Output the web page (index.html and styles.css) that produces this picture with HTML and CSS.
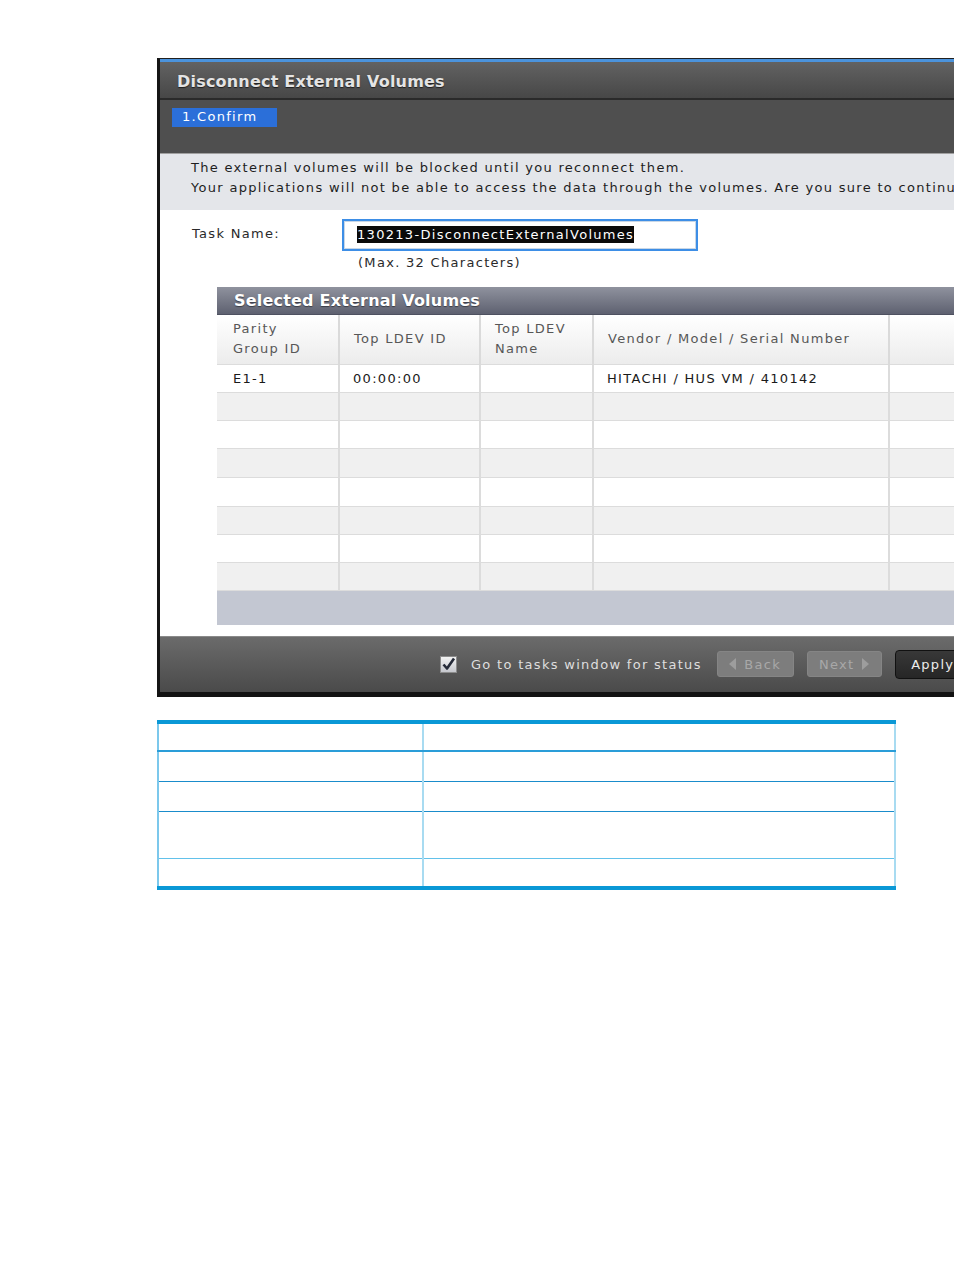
FILE: index.html
```html
<!DOCTYPE html>
<html>
<head>
<meta charset="utf-8">
<title>Disconnect External Volumes</title>
<link rel="stylesheet" href="styles.css">
</head>
<body>
<div class="shot">
  <div class="window">
    <div class="titlebar">Disconnect External Volumes</div>
    <div class="steps"><span class="step">1.Confirm</span></div>
    <div class="msg">
      <div>The external volumes will be blocked until you reconnect them.</div>
      <div>Your applications will not be able to access the data through the volumes. Are you sure to continue?</div>
    </div>
    <div class="content">
      <div class="task-row">
        <span class="task-label">Task Name:</span>
        <div class="task-input"><span class="sel">130213-DisconnectExternalVolumes</span></div>
      </div>
      <div class="hint">(Max. 32 Characters)</div>
      <div class="panel">
        <div class="panel-title">Selected External Volumes</div>
        <table class="grid">
          <colgroup><col class="c1"><col class="c2"><col class="c3"><col class="c4"><col class="c5"></colgroup>
          <thead>
            <tr><th>Parity<br>Group ID</th><th>Top LDEV ID</th><th>Top LDEV<br>Name</th><th>Vendor / Model / Serial Number</th><th></th></tr>
          </thead>
          <tbody>
            <tr class="odd"><td>E1-1</td><td>00:00:00</td><td></td><td>HITACHI / HUS VM / 410142</td><td></td></tr>
            <tr class="even"><td></td><td></td><td></td><td></td><td></td></tr>
            <tr class="odd"><td></td><td></td><td></td><td></td><td></td></tr>
            <tr class="even tall"><td></td><td></td><td></td><td></td><td></td></tr>
            <tr class="odd tall"><td></td><td></td><td></td><td></td><td></td></tr>
            <tr class="even"><td></td><td></td><td></td><td></td><td></td></tr>
            <tr class="odd"><td></td><td></td><td></td><td></td><td></td></tr>
            <tr class="even"><td></td><td></td><td></td><td></td><td></td></tr>
          </tbody>
        </table>
        <div class="panel-foot"></div>
      </div>
    </div>
    <div class="footer">
      <svg class="check" width="17" height="17" viewBox="0 0 17 17">
        <defs><linearGradient id="cb" x1="0" y1="0" x2="0" y2="1"><stop offset="0" stop-color="#f4f4f4"/><stop offset="1" stop-color="#c4c6cc"/></linearGradient></defs>
        <rect x="0.5" y="0.5" width="16" height="16" fill="url(#cb)" stroke="#8c8c8c"/>
        <path d="M3.5 8.5 L7 12.5 L14 2.5" fill="none" stroke="#252a38" stroke-width="2.6" stroke-linejoin="round"/>
      </svg>
      <span class="go">Go to tasks window for status</span>
      <span class="btn dis back"><svg width="7" height="12" viewBox="0 0 7 12"><path d="M7 0 L0 6 L7 12 Z" fill="#9d9d9d"/></svg>Back</span>
      <span class="btn dis next">Next<svg width="7" height="12" viewBox="0 0 7 12"><path d="M0 0 L7 6 L0 12 Z" fill="#9d9d9d"/></svg></span>
      <span class="btn apply">Apply</span>
    </div>
  </div>
</div>

<table class="doc">
  <colgroup><col class="d1"><col class="d2"></colgroup>
  <tr class="r1"><td></td><td></td></tr>
  <tr class="r2"><td></td><td></td></tr>
  <tr class="r3"><td></td><td></td></tr>
  <tr class="r4"><td></td><td></td></tr>
  <tr class="r5"><td></td><td></td></tr>
</table>
</body>
</html>
```

FILE: styles.css
```css
* { box-sizing: border-box; }

body {
  margin: 0;
  background: #ffffff;
  font-family: "DejaVu Sans", Verdana, sans-serif;
}

.shot {
  margin: 58px 0 0 157px;
  width: 797px;
  overflow: hidden;
}

.window {
  width: 880px;
  background: #ffffff;
  border-left: 3px solid #151515;
  border-top: 1px solid #202020;
  border-bottom: 5px solid #121212;
}

.titlebar {
  height: 41px;
  border-top: 3px solid #4b93dc;
  border-bottom: 2px solid #2a2a2a;
  background: linear-gradient(#626262, #474747);
  padding: 3px 0 0 17px;
  font-weight: bold;
  font-size: 16px;
  letter-spacing: 0.2px;
  line-height: 33px;
  color: #e4e4e4;
  text-shadow: 0 1px 1px #1e1e1e;
  white-space: nowrap;
}

.steps {
  height: 54px;
  background: #4f4f4f;
  border-bottom: 1px solid #a0a0a0;
  padding: 6px 0 0 12px;
}

.step {
  display: inline-block;
  width: 105px;
  height: 19px;
  background: #2b6fd9;
  color: #ffffff;
  font-size: 13px;
  letter-spacing: 1.3px;
  line-height: 18px;
  padding-left: 10px;
}

.msg {
  height: 56px;
  background: #e4e6ea;
  padding: 4px 0 0 31px;
  font-size: 13px;
  letter-spacing: 1.3px;
  line-height: 20px;
  color: #1e1e1e;
  white-space: nowrap;
}

.content {
  height: 426px;
  padding: 9px 0 0 0;
  font-size: 13px;
  letter-spacing: 1.3px;
  color: #222222;
}

.task-row {
  display: flex;
  height: 32px;
}

.task-label {
  width: 182px;
  padding-left: 32px;
  line-height: 29px;
  color: #2a2a2a;
}

.task-input {
  width: 356px;
  height: 32px;
  border: 2px solid #3d8ee6;
  box-shadow: inset 0 0 0 1px #c9d7e6;
  padding: 5px 0 0 13px;
  white-space: nowrap;
}

.sel {
  display: inline-block;
  background: #0a0a0a;
  color: #ffffff;
  line-height: 17px;
  height: 17px;
}

.hint {
  margin: 4px 0 0 198px;
  line-height: 16px;
  color: #2a2a2a;
}

.panel {
  margin: 16px 0 0 57px;
  width: 800px;
}

.panel-title {
  height: 28px;
  background: linear-gradient(#8f929e, #5e6170);
  border-bottom: 1px solid #4e5160;
  padding-left: 17px;
  font-weight: bold;
  font-size: 16px;
  letter-spacing: 0.2px;
  line-height: 28px;
  color: #ffffff;
  text-shadow: 0 1px 1px #3a3c46;
  white-space: nowrap;
}

.grid {
  width: 100%;
  table-layout: fixed;
  border-collapse: collapse;
  font-size: 13px;
  letter-spacing: 1.3px;
}

.grid .c1 { width: 122px; }
.grid .c2 { width: 141px; }
.grid .c3 { width: 113px; }
.grid .c4 { width: 296px; }

.grid th {
  height: 49px;
  background: linear-gradient(#ffffff, #ececec);
  border-right: 2px solid #dadada;
  border-bottom: 1px solid #dcdcdc;
  text-align: left;
  font-weight: normal;
  color: #575757;
  line-height: 20px;
  padding: 0 0 0 14px;
  white-space: nowrap;
}

.grid th:first-child, .grid td:first-child { padding-left: 16px; }

.grid td {
  height: 28px;
  border-right: 2px solid #dcdcdc;
  border-bottom: 1px solid #dcdcdc;
  padding: 0 0 0 13px;
  color: #1a1a1a;
  white-space: nowrap;
}

.grid tr.tall td { height: 29px; }
.grid tr.odd td { background: #ffffff; }
.grid tr.even td { background: #f0f0f0; }

.panel-foot {
  height: 34px;
  background: #c3c7d2;
}

.footer {
  height: 56px;
  border-top: 1px solid #8a8a8a;
  background: linear-gradient(#6b6b6b, #4a4a4a);
  display: flex;
  align-items: center;
  padding-left: 280px;
  font-size: 13px;
  letter-spacing: 1.3px;
  white-space: nowrap;
}

.check { flex: none; margin-right: 14px; margin-top: -1px; }

.go { color: #dedede; margin-right: 15px; }

.btn {
  display: inline-flex;
  align-items: center;
  justify-content: center;
  height: 26px;
  border-radius: 3px;
  margin-top: -1px;
}

.btn.dis {
  background: #7d7d7d;
  color: #a8a8a8;
  border: 1px solid #858585;
}

.back { width: 77px; margin-right: 13px; }
.back svg { margin-right: 8px; }
.next { width: 75px; margin-right: 13px; }
.next svg { margin-left: 8px; }

.apply {
  width: 76px;
  height: 29px;
  background: linear-gradient(#383838, #262626);
  border: 1px solid #111111;
  border-radius: 4px;
  color: #ececec;
}

.doc {
  margin: 23px 0 0 157px;
  width: 739px;
  table-layout: fixed;
  border-collapse: collapse;
  border-top: 4px solid #0a98d6;
  border-bottom: 4px solid #0a98d6;
  border-left: 2px solid #7cc8ec;
  border-right: 2px solid #7cc8ec;
}

.doc .d1 { width: 265px; }

.doc td {
  padding: 0;
  border-right: 2px solid #a8dbf1;
}

.doc tr.r1 td { height: 29px; border-bottom: 2px solid #2a9dd8; }
.doc tr.r2 td { height: 30px; border-bottom: 1px solid #1a8ccb; }
.doc tr.r3 td { height: 30px; border-bottom: 1px solid #1a8ccb; }
.doc tr.r4 td { height: 47px; border-bottom: 1px solid #62c1ea; }
.doc tr.r5 td { height: 30px; }
```
